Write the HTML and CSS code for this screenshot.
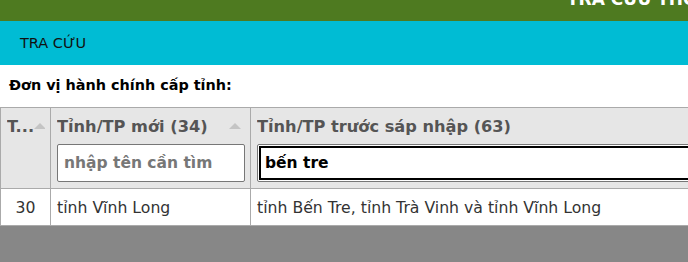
FILE: index.html
```html
<!DOCTYPE html>
<html lang="vi">
<head>
<meta charset="utf-8">
<title>Tra cứu</title>
<link rel="stylesheet" href="styles.css">
</head>
<body>
<div class="page">
  <header class="topbar"><span class="site-title">TRA CỨU THÔNG TIN ĐƠN VỊ HÀNH CHÍNH</span></header>
  <nav class="navbar"><span class="nav-item">TRA CỨU</span></nav>
  <section class="content">
    <h2 class="section-title">Đơn vị hành chính cấp tỉnh:</h2>
    <table class="grid">
      <colgroup><col class="c1"><col class="c2"><col class="c3"></colgroup>
      <thead>
        <tr>
          <th><div class="th-head"><span class="th-label">T...</span><span class="sort"></span></div></th>
          <th><div class="th-head"><span class="th-label">Tỉnh/TP mới (34)</span><span class="sort"></span></div>
            <input class="filter" type="text" placeholder="nhập tên cần tìm"></th>
          <th><div class="th-head"><span class="th-label">Tỉnh/TP trước sáp nhập (63)</span></div>
            <input class="filter focused" type="text" value="bến tre"></th>
        </tr>
      </thead>
      <tbody>
        <tr>
          <td class="num">30</td>
          <td>tỉnh Vĩnh Long</td>
          <td>tỉnh Bến Tre, tỉnh Trà Vinh và tỉnh Vĩnh Long</td>
        </tr>
      </tbody>
    </table>
  </section>
  <div class="footer-fill"></div>
</div>
</body>
</html>
```
FILE: styles.css
```css
html, body {
  margin: 0;
  padding: 0;
  height: 100%;
  overflow: hidden;
}
body {
  font-family: "DejaVu Sans", Verdana, sans-serif;
  background: #878787;
  color: #333;
}
.page {
  display: flex;
  flex-direction: column;
  min-height: 100%;
}
.topbar {
  height: 21px;
  background: #4e7a20;
  overflow: hidden;
  white-space: nowrap;
  padding-left: 567px;
}
.site-title {
  display: block;
  margin-top: -11px;
  line-height: 20px;
  font-size: 17px;
  font-weight: bold;
  color: #fff;
}
.navbar {
  height: 44px;
  background: #00bcd4;
  display: flex;
  align-items: center;
  padding-left: 20px;
}
.nav-item {
  font-size: 14.5px;
  color: #111;
}
.content {
  background: #fff;
  overflow: hidden;
}
.section-title {
  margin: 0;
  padding: 12px 9px 0;
  height: 32px;
  box-sizing: border-box;
  font-size: 14.4px;
  font-weight: bold;
  color: #000;
}
.grid {
  border-collapse: collapse;
  table-layout: fixed;
  width: 820px;
  margin-top: 10px;
}
.c1 { width: 50px; }
.c2 { width: 200px; }
.c3 { width: 570px; }
.grid th, .grid td {
  border: 1px solid #aaa;
  text-align: left;
}
.grid th {
  background: #e6e6e6;
  vertical-align: top;
  padding: 7px 5px 6px 6px;
  font-size: 16.2px;
  font-weight: bold;
  color: #555;
}
.th-head {
  display: flex;
  align-items: center;
  justify-content: space-between;
  height: 22px;
  white-space: nowrap;
  overflow: hidden;
}
.sort {
  flex: none;
  width: 0;
  height: 0;
  border-left: 6px solid transparent;
  border-right: 6px solid transparent;
  border-bottom: 6px solid #c4c4c4;
  margin-right: 4px;
}
.filter {
  display: block;
  box-sizing: border-box;
  width: 100%;
  height: 38px;
  margin-top: 7px;
  border: 1px solid #777;
  border-radius: 2px;
  padding: 0 6px;
  font-family: inherit;
  font-size: 15.5px;
  font-weight: bold;
  color: #000;
  background: #fff;
}
.filter::placeholder {
  color: #777;
}
.filter.focused {
  outline: 2px solid #000;
  outline-offset: -4px;
  padding-left: 7px;
}
.grid td {
  height: 36px;
  padding: 0 6px;
  font-size: 15.7px;
  color: #333;
  white-space: nowrap;
  vertical-align: middle;
}
.grid td.num {
  text-align: center;
}
.footer-fill {
  flex: 1;
  background: #878787;
}
```
